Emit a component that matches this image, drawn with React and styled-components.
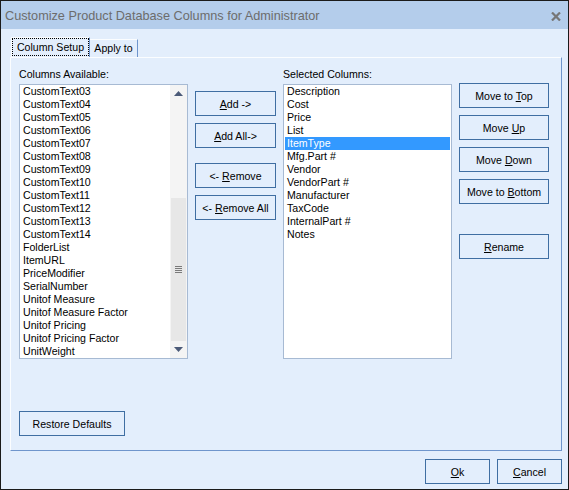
import React from 'react';
import styled, { createGlobalStyle } from 'styled-components';

const Global = createGlobalStyle`
  html, body { margin: 0; padding: 0; background: #ffffff; }
  body { font-family: "Liberation Sans", Arial, sans-serif; }
  * { box-sizing: border-box; }
`;

const Window = styled.div`
  width: 569px;
  height: 490px;
  border: 1px solid #1a1a1a;
  background: #e3eefc;
  display: flex;
  flex-direction: column;
  font-family: "Liberation Sans", Arial, sans-serif;
  font-size: 10.6px;
  color: #000;
`;

const TitleBar = styled.div`
  flex: none;
  height: 28px;
  background: #b4cdeb;
  display: flex;
  align-items: center;
  justify-content: space-between;
  padding: 2px 7px 0 4px;
  color: #6c6c6c;
  font-size: 12.7px;
`;

const Body = styled.div`
  flex: 1;
  display: flex;
  flex-direction: column;
  padding: 8px 6px 0 9px;
`;

const TabStrip = styled.div`
  display: flex;
  align-items: flex-end;
  height: 20px;
  padding-left: 1px;
`;

const Tab = styled.div`
  height: ${p => (p.$active ? 20 : 18)}px;
  width: ${p => p.$w}px;
  border-top: 1px solid #fbfdff;
  border-left: ${p => (p.$active ? '1px solid #fbfdff' : 'none')};
  border-right: 1px solid #6f95cc;
  display: flex;
  align-items: ${p => (p.$active ? 'stretch' : 'center')};
  justify-content: center;
  line-height: 13px;
`;

const FocusLabel = styled.span`
  flex: 1;
  height: 18px;
  border: 1px dotted #000;
  display: flex;
  align-items: center;
  justify-content: center;
  padding-top: 1px;
`;

const Panel = styled.div`
  height: 394px;
  border-top: 1px solid #fbfdff;
  border-left: 1px solid #fbfdff;
  border-right: 1px solid #6f95cc;
  border-bottom: 1px solid #6f95cc;
  display: flex;
  flex-direction: column;
  padding: 10px 8px 14px 8px;
`;

const Row = styled.div`
  display: flex;
  align-items: flex-start;
`;

const Column = styled.div`
  width: 169px;
  display: flex;
  flex-direction: column;
  margin-left: ${p => p.$ml || 0}px;
`;

const Label = styled.div`
  height: 13px;
  line-height: 13px;
  margin-bottom: 3px;
`;

const ListBox = styled.div`
  height: 275px;
  background: #ffffff;
  border: 1px solid #a7bad3;
  display: flex;
`;

const Items = styled.div`
  flex: 1;
  display: flex;
  flex-direction: column;
  padding: 0 1px;
`;

const Item = styled.div`
  height: 13px;
  line-height: 13px;
  padding-left: 2px;
  white-space: nowrap;
  background: ${p => (p.$sel ? '#3399ff' : 'transparent')};
  color: ${p => (p.$sel ? '#ffffff' : '#000000')};
`;

const ScrollBar = styled.div`
  width: 17px;
  background: #f4f4f4;
  display: flex;
  flex-direction: column;
`;

const ArrowBtn = styled.div`
  height: 17px;
  display: flex;
  align-items: center;
  justify-content: center;
`;

const Track = styled.div`
  flex: 1;
  display: flex;
  flex-direction: column;
  justify-content: flex-end;
  align-items: stretch;
`;

const Thumb = styled.div`
  height: 143px;
  background: #e7e7e7;
  display: flex;
  align-items: center;
  justify-content: center;
  margin: 0 1px;
`;

const Grip = styled.div`
  width: 7px;
  height: 7px;
  background: repeating-linear-gradient(to bottom, #7a7a7a 0, #7a7a7a 1px, transparent 1px, transparent 2px);
`;

const ButtonStack = styled.div`
  display: flex;
  flex-direction: column;
  margin-left: ${p => p.$ml}px;
  margin-top: ${p => p.$mt}px;
`;

const Button = styled.div`
  width: ${p => p.$w || 81}px;
  height: 25px;
  border: 1px solid #3f6ea2;
  background: #e3eefc;
  display: flex;
  align-items: center;
  justify-content: center;
  line-height: 13px;
  white-space: nowrap;
  margin-top: ${p => p.$mt || 0}px;
  padding-top: 1px;
`;

const Restore = styled(Button)`
  margin-top: auto;
`;

const Footer = styled.div`
  display: flex;
  justify-content: flex-end;
  gap: 7px;
  margin-top: 8px;
`;

const U = styled.u`
  text-decoration: underline;
  text-underline-offset: 1px;
`;

const available = [
  'CustomText03', 'CustomText04', 'CustomText05', 'CustomText06', 'CustomText07',
  'CustomText08', 'CustomText09', 'CustomText10', 'CustomText11', 'CustomText12',
  'CustomText13', 'CustomText14', 'FolderList', 'ItemURL', 'PriceModifier',
  'SerialNumber', 'Unitof Measure', 'Unitof Measure Factor', 'Unitof Pricing',
  'Unitof Pricing Factor', 'UnitWeight',
];

const selected = [
  'Description', 'Cost', 'Price', 'List', 'ItemType', 'Mfg.Part #', 'Vendor',
  'VendorPart #', 'Manufacturer', 'TaxCode', 'InternalPart #', 'Notes',
];

const Arrow = ({ down }) => (
  <svg width="9" height="5" viewBox="0 0 9 5">
    {down ? (
      <polygon points="0,0 9,0 4.5,5" fill="#4b5a78" />
    ) : (
      <polygon points="0,5 9,5 4.5,0" fill="#4b5a78" />
    )}
  </svg>
);

const CloseIcon = () => (
  <svg width="10" height="9" viewBox="0 0 10 9">
    <path d="M1 0.5 L9 8.5 M9 0.5 L1 8.5" stroke="#767676" strokeWidth="2.2" />
  </svg>
);

export default function App() {
  return (
    <>
      <Global />
      <Window>
        <TitleBar>
          <span>Customize Product Database Columns for Administrator</span>
          <CloseIcon />
        </TitleBar>
        <Body>
          <TabStrip>
            <Tab $active $w={79}>
              <FocusLabel>Column Setup</FocusLabel>
            </Tab>
            <Tab $w={48}>Apply to</Tab>
          </TabStrip>
          <Panel>
            <Row>
              <Column>
                <Label>Columns Available:</Label>
                <ListBox>
                  <Items>
                    {available.map(t => (
                      <Item key={t}>{t}</Item>
                    ))}
                  </Items>
                  <ScrollBar>
                    <ArrowBtn><Arrow /></ArrowBtn>
                    <Track>
                      <Thumb><Grip /></Thumb>
                    </Track>
                    <ArrowBtn><Arrow down /></ArrowBtn>
                  </ScrollBar>
                </ListBox>
              </Column>
              <ButtonStack $ml={7} $mt={23}>
                <Button><span><U>A</U>dd -&gt;</span></Button>
                <Button $mt={7}><span><U>A</U>dd All-&gt;</span></Button>
                <Button $mt={15}><span>&lt;- <U>R</U>emove</span></Button>
                <Button $mt={7}><span>&lt;- <U>R</U>emove All</span></Button>
              </ButtonStack>
              <Column $ml={7}>
                <Label>Selected Columns:</Label>
                <ListBox>
                  <Items>
                    {selected.map(t => (
                      <Item key={t} $sel={t === 'ItemType'}>{t}</Item>
                    ))}
                  </Items>
                </ListBox>
              </Column>
              <ButtonStack $ml={7} $mt={15}>
                <Button $w={90}><span>Move to <U>T</U>op</span></Button>
                <Button $w={90} $mt={7}><span>Move <U>U</U>p</span></Button>
                <Button $w={90} $mt={7}><span>Move <U>D</U>own</span></Button>
                <Button $w={90} $mt={7}><span>Move to <U>B</U>ottom</span></Button>
                <Button $w={90} $mt={30}><span><U>R</U>ename</span></Button>
              </ButtonStack>
            </Row>
            <Restore $w={106}>Restore Defaults</Restore>
          </Panel>
          <Footer>
            <Button $w={65}><span><U>O</U>k</span></Button>
            <Button $w={65}><span><U>C</U>ancel</span></Button>
          </Footer>
        </Body>
      </Window>
    </>
  );
}
